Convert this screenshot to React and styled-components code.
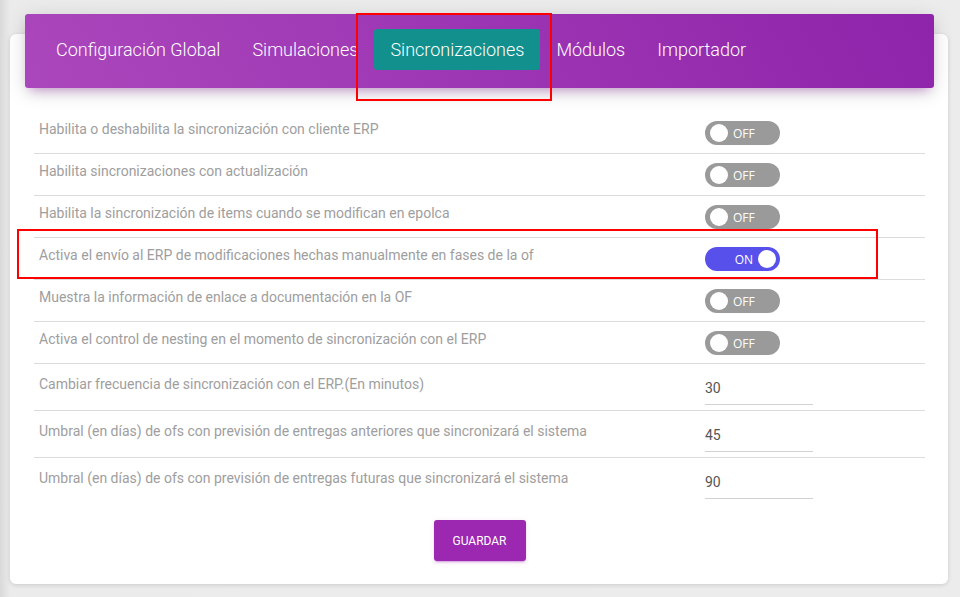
import React from "react";
import styled, { createGlobalStyle } from "styled-components";

const GlobalStyle = createGlobalStyle`
  body {
    margin: 0;
    font-family: Roboto, "Liberation Sans", sans-serif;
    background: linear-gradient(to right, #d9d9d9 0, #ebebeb 10px, #ececec 100%);
  }
`;

const Page = styled.div`
  position: relative;
  width: 960px;
  height: 597px;
  padding: 34px 12px 0 10px;
  box-sizing: border-box;
`;

const Card = styled.div`
  background: #fff;
  border-radius: 6px;
  box-shadow: 0 1px 4px rgba(0, 0, 0, 0.14);
  padding: 0 23px 23px 24px;
  display: flex;
  flex-direction: column;
`;

const Header = styled.div`
  margin: -20px -9px 0 -9px;
  height: 74px;
  padding: 0 15px;
  border-radius: 3px;
  background: linear-gradient(60deg, #ab47bc, #8e24aa);
  box-shadow: 0 4px 20px rgba(0, 0, 0, 0.14), 0 7px 10px -5px rgba(156, 39, 176, 0.4);
  display: flex;
  align-items: center;
`;

const Tab = styled.div`
  height: 41px;
  padding: 0 16px;
  display: flex;
  align-items: center;
  border-radius: 3px;
  color: #fff;
  font-size: 18px;
  font-weight: 300;
  margin-top: -3px;
  background: ${(p) => (p.$active ? "#11908e" : "transparent")};
`;

const List = styled.div`
  margin-top: 24px;
  display: flex;
  flex-direction: column;
`;

const Row = styled.div`
  display: grid;
  grid-template-columns: 666px 1fr;
  align-items: center;
  height: ${(p) => (p.$tall ? 46 : 41)}px;
  padding-left: 5px;
  border-bottom: 1px solid ${(p) => (p.$last ? "transparent" : "#dcdcdc")};
`;

const Label = styled.div`
  color: #9e9e9e;
  font-size: 14px;
  margin-top: ${(p) => (p.$tall ? -6 : -8)}px;
`;

const Switch = styled.div`
  width: 75px;
  height: 24px;
  border-radius: 12px;
  background: ${(p) => (p.$on ? "#5850eb" : "#9a9a9a")};
  display: flex;
  flex-direction: ${(p) => (p.$on ? "row-reverse" : "row")};
  align-items: center;
  padding: 0 4px 0 5px;
  box-sizing: border-box;
  gap: 5px;
  margin-top: 1px;
`;

const Knob = styled.span`
  width: 18px;
  height: 18px;
  border-radius: 50%;
  background: #fff;
`;

const SwitchText = styled.span`
  color: #fff;
  font-size: 12px;
  font-family: "Open Sans", Roboto, sans-serif;
`;

const Field = styled.div`
  width: 108px;
  border-bottom: 1px solid #d2d2d2;
  color: #555;
  font-size: 14px;
  padding: 6px 0 8px;
  margin-top: 4px;
`;

const Save = styled.button`
  align-self: center;
  margin-top: 15px;
  width: 92px;
  height: 41px;
  border: none;
  border-radius: 3px;
  background: #9c27b0;
  color: #fff;
  font-family: Roboto, sans-serif;
  font-size: 12px;
  font-weight: 400;
  box-shadow: 0 2px 2px 0 rgba(156, 39, 176, 0.14), 0 3px 1px -2px rgba(156, 39, 176, 0.2),
    0 1px 5px 0 rgba(156, 39, 176, 0.12);
`;

const Mark = styled.div`
  position: absolute;
  border: 2px solid #ff0000;
  pointer-events: none;
`;

const tabs = ["Configuración Global", "Simulaciones", "Sincronizaciones", "Módulos", "Importador"];

const rows = [
  { text: "Habilita o deshabilita la sincronización con cliente ERP", on: false },
  { text: "Habilita sincronizaciones con actualización", on: false },
  { text: "Habilita la sincronización de items cuando se modifican en epolca", on: false },
  { text: "Activa el envío al ERP de modificaciones hechas manualmente en fases de la of", on: true },
  { text: "Muestra la información de enlace a documentación en la OF", on: false },
  { text: "Activa el control de nesting en el momento de sincronización con el ERP", on: false },
  { text: "Cambiar frecuencia de sincronización con el ERP.(En minutos)", value: "30" },
  { text: "Umbral (en días) de ofs con previsión de entregas anteriores que sincronizará el sistema", value: "45" },
  { text: "Umbral (en días) de ofs con previsión de entregas futuras que sincronizará el sistema", value: "90" },
];

export default function App() {
  return (
    <Page>
      <GlobalStyle />
      <Card>
        <Header>
          {tabs.map((t) => (
            <Tab key={t} $active={t === "Sincronizaciones"}>
              {t}
            </Tab>
          ))}
        </Header>
        <List>
          {rows.map((r, i) => {
            const tall = r.value !== undefined;
            return (
              <Row key={i} $tall={tall} $last={i === rows.length - 1}>
                <Label $tall={tall}>{r.text}</Label>
                {tall ? (
                  <Field>{r.value}</Field>
                ) : (
                  <Switch $on={r.on}>
                    <Knob />
                    <SwitchText>{r.on ? "ON" : "OFF"}</SwitchText>
                  </Switch>
                )}
              </Row>
            );
          })}
        </List>
        <Save>GUARDAR</Save>
      </Card>
      <Mark style={{ left: 356, top: 13, width: 192, height: 84 }} />
      <Mark style={{ left: 17, top: 229, width: 857, height: 46 }} />
    </Page>
  );
}
